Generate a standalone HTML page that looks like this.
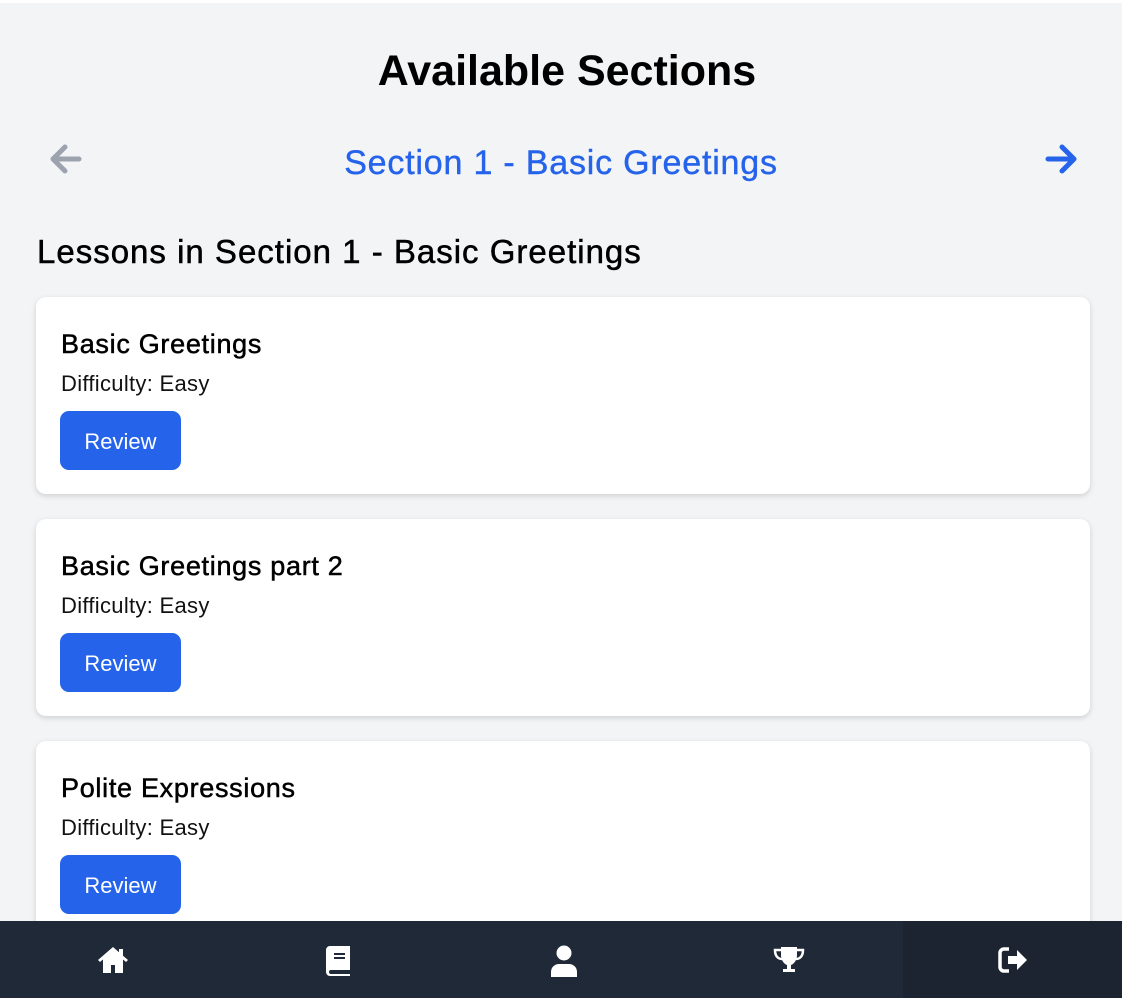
<!DOCTYPE html>
<html><head><style>
*{box-sizing:border-box;margin:0;padding:0}
body{width:1122px;height:998px;overflow:hidden;background:#f3f4f6;font-family:"Liberation Sans",sans-serif;position:relative}
.top{position:absolute;left:0;top:0;width:1122px;height:3px;background:#fff}
h1{position:absolute;top:47px;left:0;width:1122px;text-align:center;font-size:43px;font-weight:bold;color:#000;margin-left:6px}
.sec{position:absolute;top:144px;left:0;width:1122px;text-align:center;font-size:34px;letter-spacing:0.8px;color:#2563eb;-webkit-text-stroke:0.4px #2563eb}
.arr{position:absolute;top:141px}
h2{position:absolute;top:233px;left:37px;font-size:33px;letter-spacing:1px;font-weight:normal;color:#000;-webkit-text-stroke:0.5px #000}
.card{position:absolute;left:36px;width:1054px;height:197px;background:#fff;border-radius:10px;box-shadow:0 2px 6px rgba(0,0,0,.15)}
.card .t{position:absolute;left:25px;top:32px;font-size:27px;letter-spacing:0.7px;color:#000;-webkit-text-stroke:0.5px #000}
.card .d{position:absolute;left:25px;top:74px;font-size:22px;letter-spacing:0.3px;color:#111}
.card .b{position:absolute;left:24px;top:114px;width:121px;height:59px;background:#2563eb;border-radius:9px;color:#fff;font-size:22px;text-align:center;line-height:62px}
.nav{position:absolute;left:0;top:921px;width:1122px;height:77px;background:#1f2937}
.nav .dk{position:absolute;left:903px;top:0;width:219px;height:77px;background:#1c2431}
.nav svg{position:absolute;top:24px}
</style></head><body>
<div class="top"></div>
<h1>Available Sections</h1>
<svg class="arr" style="left:48px" width="36" height="36" viewBox="0 0 36 36"><path d="M31 18H6M17 6L5 18l12 12" stroke="#9ca3af" stroke-width="5" fill="none" stroke-linecap="round" stroke-linejoin="round"/></svg>
<div class="sec">Section 1 - Basic Greetings</div>
<svg class="arr" style="left:1043px" width="36" height="36" viewBox="0 0 36 36"><path d="M5 18h25M19 6l12 12-12 12" stroke="#2563eb" stroke-width="5" fill="none" stroke-linecap="round" stroke-linejoin="round"/></svg>
<h2>Lessons in Section 1 - Basic Greetings</h2>
<div class="card" style="top:297px"><div class="t">Basic Greetings</div><div class="d">Difficulty: Easy</div><div class="b">Review</div></div>
<div class="card" style="top:519px"><div class="t">Basic Greetings part 2</div><div class="d">Difficulty: Easy</div><div class="b">Review</div></div>
<div class="card" style="top:741px"><div class="t">Polite Expressions</div><div class="d">Difficulty: Easy</div><div class="b">Review</div></div>
<div class="nav"><div class="dk"></div>
<svg style="left:97px" width="32" height="30" viewBox="0 0 32 30"><path d="M16 2L1 15l2 2 3-2.5V28h8v-8h4v8h8V14.5l3 2.5 2-2-5-4.3V4h-4v3.2z" fill="#fff"/></svg>
<svg style="left:325px" width="28" height="32" viewBox="0 0 28 32"><path d="M5 1h20v24H6a2 2 0 000 4h19v2H5a4 4 0 01-4-4V5a4 4 0 014-4z" fill="#fff"/><rect x="9" y="8" width="11" height="2" fill="#1f2937"/><rect x="9" y="12" width="11" height="2" fill="#1f2937"/></svg>
<svg style="left:548px" width="32" height="32" viewBox="0 0 32 32"><circle cx="16" cy="8" r="7.5" fill="#fff"/><path d="M3 32v-5c0-5 4-8 8-8h10c4 0 8 3 8 8v5z" fill="#fff"/></svg>
<svg style="left:773px" width="32" height="32" viewBox="0 0 32 32"><path d="M8 2h16v8c0 5-3 9-6 10v4h4v3H10v-3h4v-4c-3-1-6-5-6-10z" fill="#fff"/><path d="M8 5H2c0 6 3 9 7 9M24 5h6c0 6-3 9-7 9" stroke="#fff" stroke-width="2.5" fill="none"/></svg>
<svg style="left:998px" width="32" height="30" viewBox="0 0 32 30"><path d="M11 4H6a4 4 0 00-4 4v14a4 4 0 004 4h5" stroke="#fff" stroke-width="3.5" fill="none"/><path d="M10 11h9V5l10 10-10 10v-6h-9z" fill="#fff"/></svg>
</div>
</body></html>
